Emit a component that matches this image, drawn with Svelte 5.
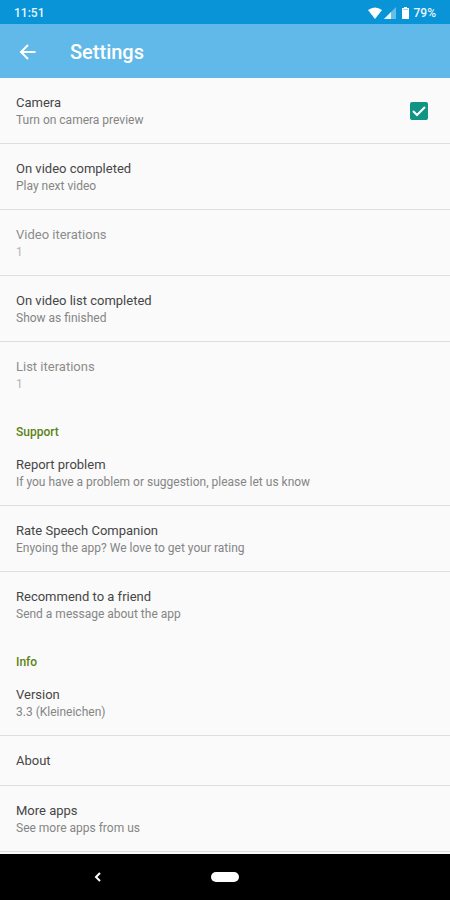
<script>
  let camera = true;

  const playback = [
    { title: "On video completed", summary: "Play next video" },
    { title: "Video iterations", summary: "1", disabled: true },
    { title: "On video list completed", summary: "Show as finished" },
    { title: "List iterations", summary: "1", disabled: true }
  ];

  const sections = [
    { items: playback },
    {
      name: "Support",
      items: [
        {
          title: "Report problem",
          summary: "If you have a problem or suggestion, please let us know"
        },
        {
          title: "Rate Speech Companion",
          summary: "Enyoing the app? We love to get your rating"
        },
        {
          title: "Recommend to a friend",
          summary: "Send a message about the app"
        }
      ]
    },
    {
      name: "Info",
      items: [
        { title: "Version", summary: "3.3 (Kleineichen)" },
        { title: "About" },
        { title: "More apps", summary: "See more apps from us" }
      ]
    }
  ];
</script>

<style>
  :global(body) {
    margin: 0;
    background: #fafafa;
  }
  .screen {
    display: flex;
    flex-direction: column;
    min-height: 100vh;
    font-family: Roboto, "Noto Sans", sans-serif;
    color: #464646;
  }
  .status {
    display: flex;
    align-items: center;
    justify-content: space-between;
    height: 24px;
    padding: 2px 14px 0;
    box-sizing: border-box;
    background: #0994d8;
    color: #e8f6fd;
    font-size: 12px;
    font-weight: 500;
  }
  .icons {
    display: flex;
    align-items: center;
  }
  .wifi {
    margin-right: 2px;
  }
  .battery {
    margin: 0 5px 0 6px;
  }
  svg {
    display: block;
  }
  header {
    display: flex;
    align-items: center;
    gap: 30px;
    height: 54px;
    padding: 1px 16px 0;
    box-sizing: border-box;
    background: #60b9e9;
    color: #fff;
  }
  h1 {
    margin: 0;
    font-size: 20px;
    font-weight: 500;
    line-height: 26px;
  }
  button {
    border: none;
    background: none;
    color: inherit;
    font-family: inherit;
  }
  .icon {
    padding: 0;
  }
  main {
    flex: 1;
  }
  section {
    border-bottom: 1px solid #dedede;
  }
  section.open {
    border-bottom: none;
  }
  h2 {
    margin: 0;
    padding: 17px 16px 0;
    color: #5c8216;
    font-size: 12px;
    font-weight: 500;
    line-height: 16px;
  }
  .row {
    display: flex;
    align-items: center;
    justify-content: space-between;
    width: 100%;
    box-sizing: border-box;
    padding: 16px 22px 15px 16px;
    text-align: left;
  }
  .row + .row {
    border-top: 1px solid #dedede;
  }
  .camera {
    border-bottom: 1px solid #dedede;
  }
  .title,
  .summary {
    display: block;
  }
  .title {
    font-size: 13px;
    line-height: 18px;
  }
  .summary {
    color: #858585;
    font-size: 12px;
    line-height: 16px;
  }
  .row:disabled .title {
    color: #8c8c8c;
  }
  .row:disabled .summary {
    color: #b5b5b5;
  }
  input {
    appearance: none;
    width: 18px;
    height: 18px;
    margin: 0;
    border: 2px solid #109484;
    border-radius: 2px;
  }
  input:checked {
    background: #109484
      url("data:image/svg+xml,%3Csvg xmlns='http://www.w3.org/2000/svg' viewBox='0 0 14 14'%3E%3Cpath d='M1 7l4 4 8-8' fill='none' stroke='white' stroke-width='2'/%3E%3C/svg%3E")
      center / 14px no-repeat;
  }
  nav {
    display: grid;
    grid-template-columns: 1fr 28px 1fr;
    align-items: center;
    height: 46px;
    background: #000;
    color: #fff;
  }
  .back {
    justify-self: center;
    padding: 0 16px 0 0;
  }
  .home {
    height: 10px;
    padding: 0;
    border-radius: 5px;
    background: #fff;
  }
</style>

<div class="screen">
  <div class="status">
    <span>11:51</span>
    <div class="icons">
      <svg class="wifi" width="14" height="12" viewBox="0 0 14 12">
        <path d="M0 3Q7-2 14 3L7 12z" fill="#fff" />
      </svg>
      <svg width="12" height="12" viewBox="0 0 12 12">
        <path d="M12 0v12H0z" fill="#68bce7" />
        <path d="M7 5v7H0z" fill="#e8f6fd" />
      </svg>
      <svg class="battery" width="7" height="12" viewBox="0 0 7 12">
        <path d="M2 0h3v1h2v11H0V1h2z" fill="#fff" />
        <path d="M1 2h5v1H1z" fill="#9ed5f1" />
      </svg>
      <span>79%</span>
    </div>
  </div>

  <header>
    <button class="icon" aria-label="Back">
      <svg width="24" height="24" viewBox="0 0 24 24">
        <path
          d="M19.5 12H6M12 5l-7 7 7 7"
          fill="none"
          stroke="#fff"
          stroke-width="2" />
      </svg>
    </button>
    <h1>Settings</h1>
  </header>

  <main>
    <label class="row camera">
      <span>
        <span class="title">Camera</span>
        <span class="summary">Turn on camera preview</span>
      </span>
      <input type="checkbox" bind:checked={camera} />
    </label>

    {#each sections as section, i}
      <section class:open={i < sections.length - 1}>
        {#if section.name}
          <h2>{section.name}</h2>
        {/if}
        {#each section.items as item}
          <button class="row" disabled={item.disabled}>
            <span>
              <span class="title">{item.title}</span>
              {#if item.summary}
                <span class="summary">{item.summary}</span>
              {/if}
            </span>
          </button>
        {/each}
      </section>
    {/each}
  </main>

  <nav>
    <button class="back" aria-label="Go back">
      <svg width="8" height="12" viewBox="0 0 8 12">
        <path d="M6 2L2 6l4 4" fill="none" stroke="#fff" stroke-width="2" />
      </svg>
    </button>
    <button class="home" aria-label="Home"></button>
  </nav>
</div>
